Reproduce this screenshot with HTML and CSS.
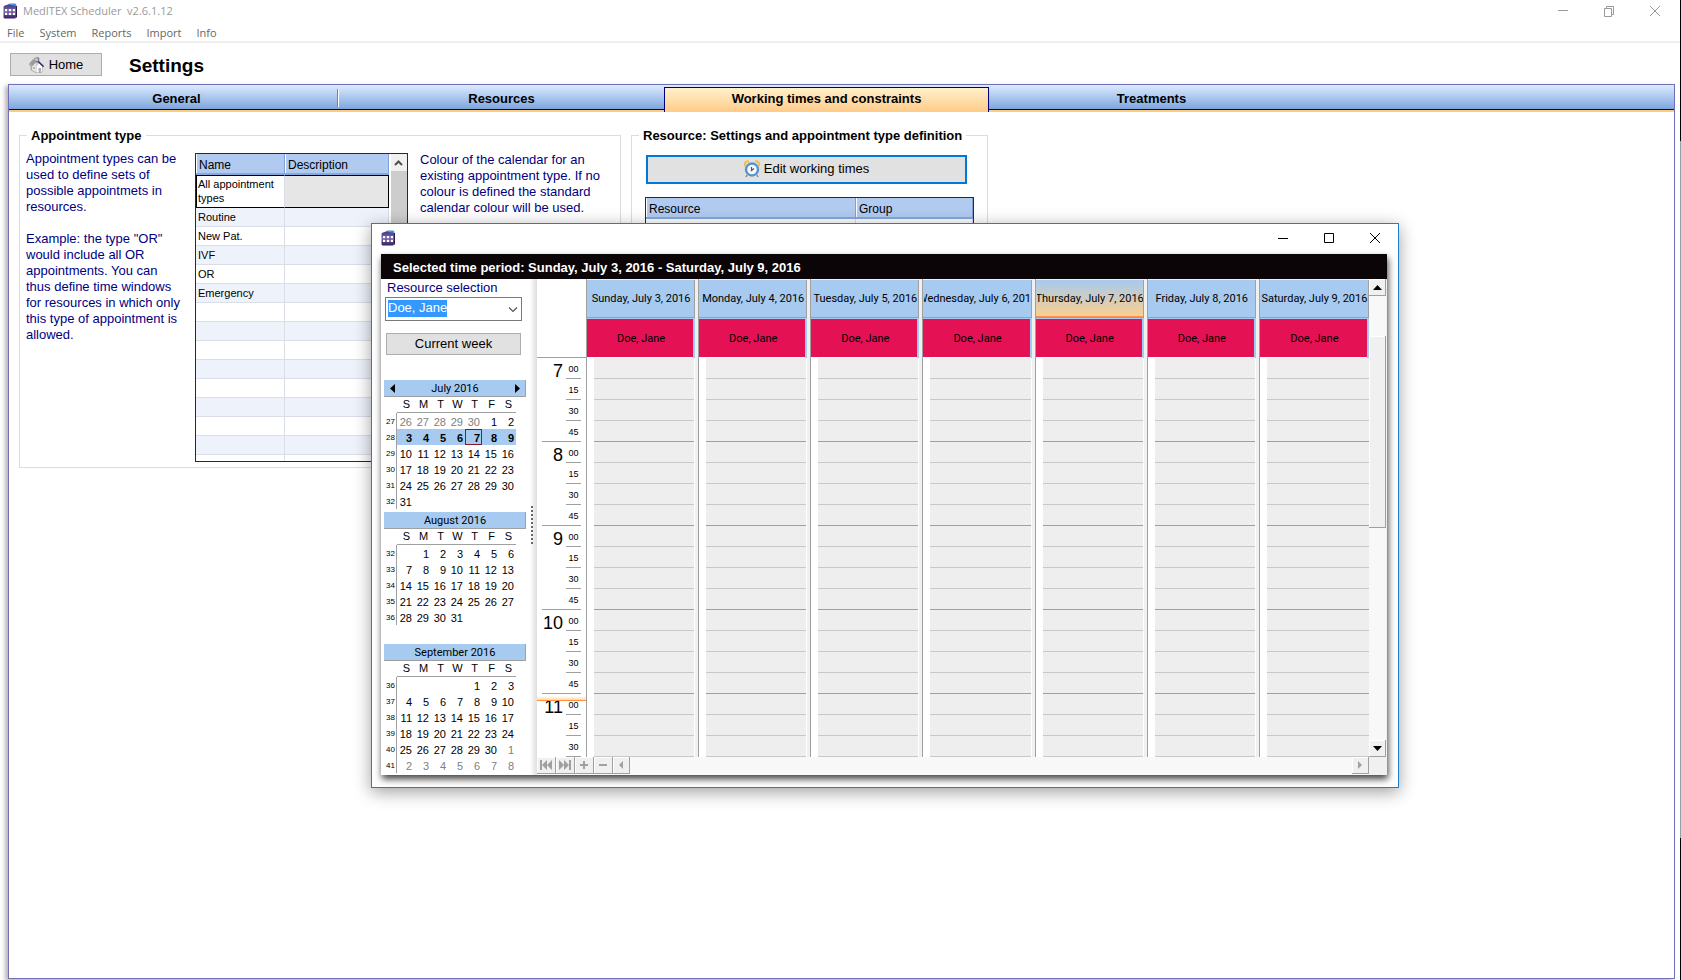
FILE: index.html
```
<!DOCTYPE html>
<html lang="en">
<head>
<meta charset="utf-8">
<title>MedITEX Scheduler v2.6.1.12</title>
<link rel="stylesheet" href="styles.css">
</head>
<body>
<svg class="defs" width="0" height="0" aria-hidden="true">
  <defs>
    <linearGradient id="app-grad" x1="0" y1="0" x2="0" y2="1">
      <stop offset="0" stop-color="#4a3b86"/>
      <stop offset=".5" stop-color="#7a64a8"/>
      <stop offset="1" stop-color="#33205f"/>
    </linearGradient>
    <symbol id="app-icon" viewBox="0 0 14 16">
      <path d="M5 3V1.500Q5.500.500 7 .500H12.500Q13.500 1 13.500 3V5H5Z" fill="#4a94d6"/>
      <path d="M2 2.500L5 1.500L13 3V14Q13 15.500 11.500 15.500H2Q.500 15.500 .500 14V4Q.500 2.800 2 2.500Z" fill="url(#app-grad)"/>
      <path d="M13.500 3V14.500" stroke="#2b1a52"/>
      <path d="M2 6h2v2H2zM6 6h2v2H6zM10 6h2v2h-2zM2 10h2v2H2zM6 10h2v2H6zM10 10h2v2h-2z" fill="#fff"/>
      <path d="M4 7h2M8 7h2M4 11h2M8 11h2M3 8v2M7 8v2M11 8v2" stroke="#a99bcb"/>
    </symbol>
  </defs>
</svg>

<header class="titlebar">
  <svg class="app-icon"><use href="#app-icon"/></svg>
  <span class="titlebar-text">MedITEX Scheduler&nbsp; v2.6.1.12</span>
  <div class="window-buttons">
    <button type="button" aria-label="Minimize"><svg width="12" height="12" viewBox="0 0 12 12"><path d="M1 5.500h10"/></svg></button>
    <button type="button" aria-label="Restore"><svg width="12" height="12" viewBox="0 0 12 12"><path d="M1.500 3.500h7v8h-7zM3.500 3.500v-2h7v8h-2"/></svg></button>
    <button type="button" aria-label="Close"><svg width="12" height="12" viewBox="0 0 12 12"><path d="M1 1l10 10M11 1L1 11"/></svg></button>
  </div>
</header>
<nav class="menubar">
  <button type="button">File</button>
  <button type="button">System</button>
  <button type="button">Reports</button>
  <button type="button">Import</button>
  <button type="button">Info</button>
</nav>

<div class="page-head">
  <button type="button" class="push home">
    <svg width="16" height="16" viewBox="0 0 16 16">
      <path d="M1 6L5 1.500L8 .500L10 1V4L15 9.500L13 10V15L8 16L2 13V9L.500 8Z" fill="#c4c4c4" stroke="#8c8c8c" stroke-width=".6"/>
      <path d="M3 9L7 5L8 15.500L3 13Z" fill="#e6e6e6"/>
      <path d="M8 15.500V9L10 6L13 9.500V14.500Z" fill="#fff"/>
      <path d="M1 6L5 2L8 4.500L3 9.500Z" fill="#9c9c9c"/>
      <path d="M9 4.500L14.500 9.500" fill="none" stroke="#1c2273" stroke-width="1.200"/>
      <path d="M7 5L9 4.500" fill="none" stroke="#555" stroke-width=".8"/>
      <path d="M7.500 1h2v3" fill="none" stroke="#7d7d7d"/>
      <path d="M9.500 15V11h2.500v3.500Z" fill="#aaa"/>
      <path d="M4 10h2v2H4z" fill="#b9b9b9"/>
    </svg>
    Home
  </button>
  <h1>Settings</h1>
</div>

<main class="panel">
  <div class="tabs" role="tablist">
    <button type="button" class="tab divided" role="tab">General</button>
    <button type="button" class="tab" role="tab">Resources</button>
    <button type="button" class="tab active" role="tab" aria-selected="true">Working times and constraints</button>
    <button type="button" class="tab" role="tab">Treatments</button>
  </div>

  <div class="groups">
    <fieldset class="group types">
      <legend>Appointment type</legend>
      <div class="types-body">
        <div class="note">
          <p>Appointment types can be<br>used to define sets of<br>possible appointmets in<br>resources.</p>
          <p>Example: the type "OR"<br>would include all OR<br>appointments. You can<br>thus define time windows<br>for resources in which only<br>this type of appointment is<br>allowed.</p>
        </div>
        <div class="list">
          <div class="list-view">
            <table class="grid">
              <thead><tr><th class="name">Name</th><th>Description</th></tr></thead>
              <tbody>
                <tr class="current"><td>All appointment types</td><td></td></tr>
                <tr><td>Routine</td><td></td></tr>
                <tr><td>New Pat.</td><td></td></tr>
                <tr><td>IVF</td><td></td></tr>
                <tr><td>OR</td><td></td></tr>
                <tr><td>Emergency</td><td></td></tr>
                <tr><td></td><td></td></tr>
                <tr><td></td><td></td></tr>
                <tr><td></td><td></td></tr>
                <tr><td></td><td></td></tr>
                <tr><td></td><td></td></tr>
                <tr><td></td><td></td></tr>
                <tr><td></td><td></td></tr>
                <tr><td></td><td></td></tr>
                <tr><td></td><td></td></tr>
              </tbody>
            </table>
          </div>
          <div class="list-scroll">
            <svg width="15" height="17" viewBox="0 0 15 17"><path d="M4 11L7.500 7.500L11 11" fill="none" stroke="#505050" stroke-width="2"/></svg>
            <div class="list-thumb"></div>
          </div>
        </div>
        <p class="note">Colour of the calendar for an<br>existing appointment type. If no<br>colour is defined the standard<br>calendar colour will be used.</p>
      </div>
    </fieldset>

    <fieldset class="group resource">
      <legend>Resource: Settings and appointment type definition</legend>
      <button type="button" class="push edit">
        <svg width="16" height="18" viewBox="0 0 16 18">
          <path d="M1 6Q0 1 5 1.500M15 6Q16 1 11 1.500" fill="none" stroke="#efc050" stroke-width="2.200"/>
          <path d="M3 15l-1 2M13 15l1 2" stroke="#888" stroke-width="1.500"/>
          <circle cx="8" cy="9.500" r="6" fill="#f4f9fd" stroke="#5b93c9" stroke-width="2.400"/>
          <path d="M7.500 7v3.500L10 8.500" fill="none" stroke="#555" stroke-width="1.200"/>
        </svg>
        Edit working times
      </button>
      <div class="list resource-list">
        <table class="grid">
          <thead><tr><th class="resource-name">Resource</th><th>Group</th></tr></thead>
          <tbody><tr><td></td><td></td></tr><tr><td></td><td></td></tr></tbody>
        </table>
      </div>
    </fieldset>
  </div>
</main>

<section class="dialog" role="dialog" aria-label="Working times">
  <div class="dialog-caption">
    <svg class="app-icon"><use href="#app-icon"/></svg>
    <div class="window-buttons">
      <button type="button" aria-label="Minimize"><svg width="12" height="12" viewBox="0 0 12 12"><path d="M1 6.500h10"/></svg></button>
      <button type="button" aria-label="Maximize"><svg width="12" height="12" viewBox="0 0 12 12"><path d="M1.500 1.500h9v9h-9z"/></svg></button>
      <button type="button" aria-label="Close"><svg width="12" height="12" viewBox="0 0 12 12"><path d="M1 1l10 10M11 1L1 11"/></svg></button>
    </div>
  </div>
  <div class="dialog-body">
    <h2>Selected time period: Sunday, July 3, 2016 - Saturday, July 9, 2016</h2>
    <div class="split">
      <div class="side">
        <label for="resource">Resource selection</label>
        <div class="combo">
          <select id="resource"><option>Doe, Jane</option></select>
          <svg width="10" height="6" viewBox="0 0 10 6"><path d="M1 .500L5 4.500L9 .500" fill="none" stroke="#555" stroke-width="1.200"/></svg>
        </div>
        <button type="button" class="push week">Current week</button>
        <div class="months" id="months"></div>
      </div>
      <div class="splitter"></div>
      <div class="scheduler">
        <div class="time-col" id="times"></div>
        <div class="days" id="days"></div>
        <div class="vscroll">
          <button type="button" class="bevel" aria-label="Scroll up"><svg width="9" height="5" viewBox="0 0 9 5"><path d="M0 5L4.500 0L9 5Z"/></svg></button>
          <div class="vthumb bevel"></div>
          <button type="button" class="bevel" aria-label="Scroll down"><svg width="9" height="5" viewBox="0 0 9 5"><path d="M0 0L4.500 5L9 0Z"/></svg></button>
        </div>
        <div class="footbar">
          <button type="button" class="bevel" aria-label="First"><svg width="12" height="10" viewBox="0 0 12 10"><path d="M0 0h2v10H0zM7 0v10L2 5zM12 0v10L7 5z"/></svg></button>
          <button type="button" class="bevel" aria-label="Last"><svg width="12" height="10" viewBox="0 0 12 10"><path d="M10 0h2v10h-2zM0 0v10l5-5zM5 0v10l5-5z"/></svg></button>
          <button type="button" class="bevel" aria-label="Add"><svg width="12" height="10" viewBox="0 0 12 10"><path d="M5 1h2v3h3v2H7v3H5V6H2V4h3z"/></svg></button>
          <button type="button" class="bevel" aria-label="Remove"><svg width="12" height="10" viewBox="0 0 12 10"><path d="M2 4h8v2H2z"/></svg></button>
          <button type="button" class="bevel narrow" aria-label="Scroll left"><svg width="5" height="8" viewBox="0 0 5 8"><path d="M4 0v8L0 4z"/></svg></button>
          <button type="button" class="bevel narrow last" aria-label="Scroll right"><svg width="5" height="8" viewBox="0 0 5 8"><path d="M0 0v8l4-4z"/></svg></button>
        </div>
        <div class="corner"></div>
      </div>
    </div>
  </div>
</section>
<script src="app.js"></script>
</body>
</html>
```
FILE: styles.css
```
* { box-sizing: border-box; }

body {
  margin: 0;
  min-height: 100vh;
  display: flex;
  flex-direction: column;
  position: relative;
  background: #fff;
  color: #000;
  font-family: "Liberation Sans", Arial, sans-serif;
  font-size: 13px;
  line-height: 16px;
  border-right: 1px solid;
  border-image: linear-gradient(#000 0 142px, #8fa3a8 142px 837px, #000 837px) 1;
  overflow-x: hidden;
}

button, select { font: inherit; color: inherit; padding: 0; margin: 0; }
h1, h2, p { margin: 0; }
.defs { position: absolute; }
.app-icon { width: 14px; height: 16px; }

/* Main window caption and menu */
.titlebar {
  display: flex;
  align-items: center;
  height: 22px;
  padding-left: 3px;
  color: #999;
  font-family: "Open Sans", "Noto Sans", sans-serif;
  font-size: 11px;
}
.titlebar-text { margin-left: 6px; }
.window-buttons { display: flex; margin-left: auto; }
.window-buttons button {
  width: 46px;
  height: 20px;
  border: 0;
  background: none;
  display: flex;
  align-items: center;
  justify-content: center;
}
.window-buttons svg { fill: none; stroke: #999; }
.titlebar .window-buttons { margin-right: 2px; }

.menubar {
  display: flex;
  gap: 15px;
  height: 21px;
  padding: 0 7px;
  border-bottom: 2px solid #efefef;
  color: #666;
  font-family: "Open Sans", "Noto Sans", sans-serif;
  font-size: 11px;
}
.menubar button { border: 0; background: none; line-height: 21px; height: 21px; }

.push {
  display: flex;
  align-items: center;
  justify-content: center;
  gap: 4px;
  border: 1px solid #adadad;
  background: #e1e1e1;
}
.page-head {
  display: flex;
  align-items: center;
  gap: 27px;
  padding: 10px 10px 8px;
}
.home { width: 92px; height: 23px; }
h1 { font-size: 19px; line-height: 21px; padding-top: 2px; }

/* Tabbed panel */
.panel {
  flex: 1;
  margin: 0 5px 1px 8px;
  border: 1px solid #7070b8;
  box-shadow: -3px 2px 4px rgba(60, 40, 40, .35);
}
.tabs {
  display: flex;
  align-items: stretch;
  height: 27px;
  padding-left: 5px;
  background: linear-gradient(#dcebff 0, #7ea6de 24px, #000080 24px, #000080 25px, #ffcb80 25px, #ffcb80 27px);
}
.tab {
  width: 325px;
  border: 0;
  background: none;
  font-weight: bold;
  padding-top: 1px;
}
.tab.divided {
  background: linear-gradient(90deg, #5f86cc 1px, #fff 1px) right 4px / 2px 18px no-repeat;
}
.tab.active {
  margin-top: 2px;
  padding: 0 0 2px;
  border: 1px solid #000080;
  border-bottom: 0;
  background: linear-gradient(#fff1cd, #ffcb87);
}

.groups { display: flex; gap: 10px; padding: 15px 10px; }
.group { margin: 0; padding: 0; border: 1px solid #dcdcdc; min-width: 0; }
.group legend { padding: 1px 4px 0; font-weight: bold; white-space: nowrap; line-height: 16px; }
.types { width: 602px; }
.types legend { margin-left: 7px; }
.resource { width: 357px; }
.resource legend { margin-left: 7px; }
.types-body { display: flex; padding: 0 6px 5px; }
.note { color: #000080; padding-top: 7px; }
div.note { width: 169px; }
.note p + p { margin-top: 16px; }
p.note { margin-left: 12px; padding-top: 8px; }

.list {
  display: flex;
  width: 213px;
  height: 309px;
  margin-top: 9px;
  border: 1px solid #002d86;
  overflow: hidden;
}
.list-view { flex: 1; overflow: hidden; }
.list-scroll { width: 18px; background: #f0f0f0; border-left: 2px solid #fff; display: flex; flex-direction: column; }
.list-thumb { height: 120px; background: #cdcdcd; }

.grid { width: 100%; border-collapse: separate; border-spacing: 0; table-layout: fixed; }
.grid th {
  height: 21px;
  padding: 2px 3px 0;
  border-bottom: 2px solid #85a8e0;
  border-right: 1px solid #7f9fd8;
  background: linear-gradient(90deg, #fff 1px, #b0caf0 1px);
  font-size: 12px;
  font-weight: normal;
  text-align: left;
}
.grid .name { width: 89px; }
.grid .resource-name { width: 210px; }
.grid td {
  height: 19px;
  padding: 0 2px;
  border-right: 1px solid #dadee6;
  border-bottom: 1px solid #dadee6;
  font-size: 11px;
  line-height: 14px;
}
.grid tr:nth-child(even) td { background: #eef3fb; }
.grid .current td { height: 33px; border-top: 1px solid #000; border-bottom-color: #000; padding: 0 1px 2px; }
.grid .current td:first-child { border-left: 1px solid #000; }
.grid .current td:last-child { border-right-color: #000; background: #e6e6e6; }

.edit { width: 321px; height: 29px; margin: 11px 0 0 14px; padding-bottom: 2px; border: 2px solid #0078d7; }
.resource-list { width: 329px; height: 200px; margin: 13px 0 0 13px; }

/* Floating window */
.dialog {
  position: absolute;
  top: 223px;
  left: 371px;
  right: 281px;
  padding: 0 11px 12px 9px;
  border: 1px solid #1a80d2;
  background: #fff;
  box-shadow: 0 4px 16px rgba(0, 0, 0, .38);
}
.dialog-caption { display: flex; align-items: center; height: 30px; padding-bottom: 2px; }
.dialog-caption .window-buttons { margin-right: -11px; }
.dialog-caption svg { stroke: none; }
.dialog-caption .window-buttons svg { stroke: #000; }
.dialog-body { background: #fff; box-shadow: 1px 4px 7px rgba(0, 0, 0, .75); }
h2 {
  height: 25px;
  padding-left: 12px;
  background: #0b0508;
  color: #fff;
  font-size: 13px;
  line-height: 27px;
}
.split { display: flex; }
.side { width: 149px; padding: 0 4px 0 3px; }
.side label { display: block; padding: 1px 3px; color: #000080; }
.combo { position: relative; margin: 0 1px; }
.combo select {
  display: block;
  width: 137px;
  height: 24px;
  padding: 0 2px 2px;
  border: 1px solid #7a7a7a;
  border-radius: 0;
  appearance: none;
  color: #fff;
  background: linear-gradient(#3399ff, #3399ff) 2px 2px / 59px 17px no-repeat #fff;
}
.combo svg { position: absolute; right: 7px; top: 10px; pointer-events: none; }
.week { width: 135px; height: 22px; margin: 12px 0 0 2px; }
.months { display: flex; flex-direction: column; padding-top: 25px; }

.month { height: 132px; overflow: hidden; }
.month:last-child { height: 131px; }
.month-head {
  display: flex;
  align-items: center;
  justify-content: space-between;
  height: 17px;
  padding: 1px 5px 0 6px;
  border-right: 1px solid #a0a0a0;
  border-bottom: 1px solid #a0a0a0;
  background: #a6caf0;
  font-family: Roboto, sans-serif;
  font-size: 11px;
}
.month-head span { flex: 1; text-align: center; }
.month-head button { border: 0; background: none; display: flex; }
.month table { border-collapse: separate; border-spacing: 0; table-layout: fixed; width: 132px; font-size: 11px; }
.month th { font-weight: normal; padding: 0; }
.month thead th { height: 16px; padding: 0 0 1px 2px; line-height: 14px; border-bottom: 1px solid #a0a0a0; }
.month thead .wk { border-bottom-color: transparent; }
.month .wk { width: 13px; }
.month tbody .wk { border-right: 1px solid #a0a0a0; font-size: 8px; text-align: right; padding: 1px 1px 0 0; line-height: 15px; }
.month td { height: 16px; padding: 2px 2px 0 0; text-align: right; line-height: 14px; }
.month .muted { color: #808080; }
.month .picked td { background: #a6caf0; font-weight: bold; }
.month .picked .today { box-shadow: inset 0 0 0 1px #8b1a1a; }

.splitter {
  width: 7px;
  background:
    repeating-linear-gradient(#666 0 2px, transparent 2px 4px) 1px 227px / 2px 38px no-repeat,
    linear-gradient(90deg, #fff, #dedede);
}

/* Week view */
.scheduler {
  flex: 1;
  min-width: 0;
  display: grid;
  grid-template-columns: 50px 1fr 18px;
  grid-template-rows: auto 18px;
}
.time-col { position: relative; border-right: 1px solid #a0a0a0; }
.time-head { height: 79px; border-bottom: 1px solid #a0a0a0; }
.hour { display: flex; justify-content: flex-end; margin: 0 5px; border-bottom: 1px solid #a0a0a0; }
.hour b { font-size: 18px; font-weight: normal; line-height: 26px; padding-right: 3px; }
.hour span {
  display: block;
  width: 15px;
  height: 21px;
  border-bottom: 1px solid #a0a0a0;
  font-size: 9px;
  line-height: 22px;
  text-align: center;
}
.hour span:nth-child(4) { height: 20px; border: 0; }
.hour:last-of-type { border: 0; }
.now {
  position: absolute;
  left: 0;
  right: 0;
  top: 417px;
  height: 5px;
  border-bottom: 1px solid #ff9040;
  background: linear-gradient(#fff, #ffd9a8);
}

.days { display: grid; grid-template-columns: repeat(6, 112fr) 109fr; }
.day {
  min-width: 0;
  padding: 1px 3px 0 0;
  border-right: 1px solid #a0a0a0;
  background: #f0f0f0;
}
.day:last-child { padding-right: 0; border-right: 0; }
.day-head, .day-name {
  display: flex;
  align-items: center;
  justify-content: center;
  font-family: Roboto, sans-serif;
  font-size: 11px;
  white-space: nowrap;
}
.day-head {
  height: 38px;
  padding-top: 1px;
  border: solid #a0a0a0;
  border-width: 0 1px 1px 0;
  background: #a6caf0;
}
.day-head span { display: flex; justify-content: center; width: 100%; margin-left: 1px; overflow: hidden; }
.day-head.today { background: linear-gradient(#a6caf0, #ffcf8c); box-shadow: inset 0 -1px #ff9050; }
.day-name {
  height: 40px;
  padding-left: 2px;
  border: solid #a6caf0;
  border-width: 1px 2px 0 0;
  background: #e51155;
  box-shadow: inset 0 -1px #fff;
}
.slots { background: #fff; padding-left: 7px; border-right: 1px solid #fff; }
.day:last-child .slots { border-right: 0; }
.slot { height: 21px; background: #eee; border-bottom: 1px solid #c8c8c8; }
.slot:nth-child(4n) { border-bottom-color: #a0a0a0; }

.bevel {
  border: solid #a0a0a0;
  border-width: 0 1px 1px 0;
  background: #f0f0f0;
  box-shadow: inset 1px 1px #fff;
}
button.bevel { display: flex; align-items: center; justify-content: center; }
.vscroll { display: flex; flex-direction: column; background: #f8f8f8; border-right: 1px solid #f0f0f0; }
.vscroll button { height: 17px; }
.vthumb { height: 192px; margin: 40px 0 auto; }
.footbar { grid-column: 1 / 3; display: flex; padding: 0; background: #f8f8f8; }
.footbar button { width: 19px; height: 17px; }
.footbar .narrow { width: 17px; }
.footbar svg { fill: #a0a0a0; }
.footbar .last { margin-left: auto; }
.corner { background: #f0f0f0; }
```
FILE: app.js
```
const MONTHS = [
  { title: "July 2016", week: 27, lead: [26, 27, 28, 29, 30], days: 31, tail: 0, nav: true, picked: 1, today: 7 },
  { title: "August 2016", week: 32, lead: [""], days: 31, tail: 0 },
  { title: "September 2016", week: 36, lead: ["", "", "", ""], days: 30, tail: 8 }
];
const DAYS = [
  "Sunday, July 3, 2016", "Monday, July 4, 2016", "Tuesday, July 5, 2016",
  "Wednesday, July 6, 2016", "Thursday, July 7, 2016", "Friday, July 8, 2016",
  "Saturday, July 9, 2016"
];

function arrow(label, path) {
  return `<button type="button" aria-label="${label}"><svg width="5" height="9" viewBox="0 0 5 9"><path d="${path}"/></svg></button>`;
}

function month(m) {
  const cells = m.lead.map(d => ({ d, muted: true }));
  for (let d = 1; d <= m.days; d++) cells.push({ d, today: d === m.today });
  for (let d = 1; d <= m.tail; d++) cells.push({ d, muted: true });
  let rows = "";
  for (let i = 0; i < cells.length; i += 7) {
    const row = i / 7;
    const tds = cells.slice(i, i + 7).map(c =>
      `<td class="${c.muted ? "muted" : c.today ? "today" : ""}">${c.d}</td>`).join("");
    rows += `<tr class="${row === m.picked ? "picked" : ""}"><th class="wk">${m.week + row}</th>${tds}</tr>`;
  }
  const heads = [..."SMTWTFS"].map(s => `<th>${s}</th>`).join("");
  return `<div class="month"><div class="month-head">${m.nav ? arrow("Previous month", "M5 0v9L0 4.500z") : ""}<span>${m.title}</span>${m.nav ? arrow("Next month", "M0 0v9l5-4.500z") : ""}</div>
    <table><thead><tr><th class="wk"></th>${heads}</tr></thead><tbody>${rows}</tbody></table></div>`;
}

document.getElementById("months").innerHTML = MONTHS.map(month).join("");

const hours = [7, 8, 9, 10, 11].map(h => {
  const marks = h === 11 ? ["00", "15", "30"] : ["00", "15", "30", "45"];
  return `<div class="hour"><b>${h}</b><div>${marks.map(q => `<span>${q}</span>`).join("")}</div></div>`;
}).join("");
document.getElementById("times").innerHTML = `<div class="time-head"></div><i class="now"></i>${hours}`;

document.getElementById("days").innerHTML = DAYS.map((d, i) =>
  `<div class="day"><div class="day-head${i === 4 ? " today" : ""}"><span>${d}</span></div><div class="day-name">Doe, Jane</div><div class="slots">${'<div class="slot"></div>'.repeat(19)}</div></div>`).join("");
```
